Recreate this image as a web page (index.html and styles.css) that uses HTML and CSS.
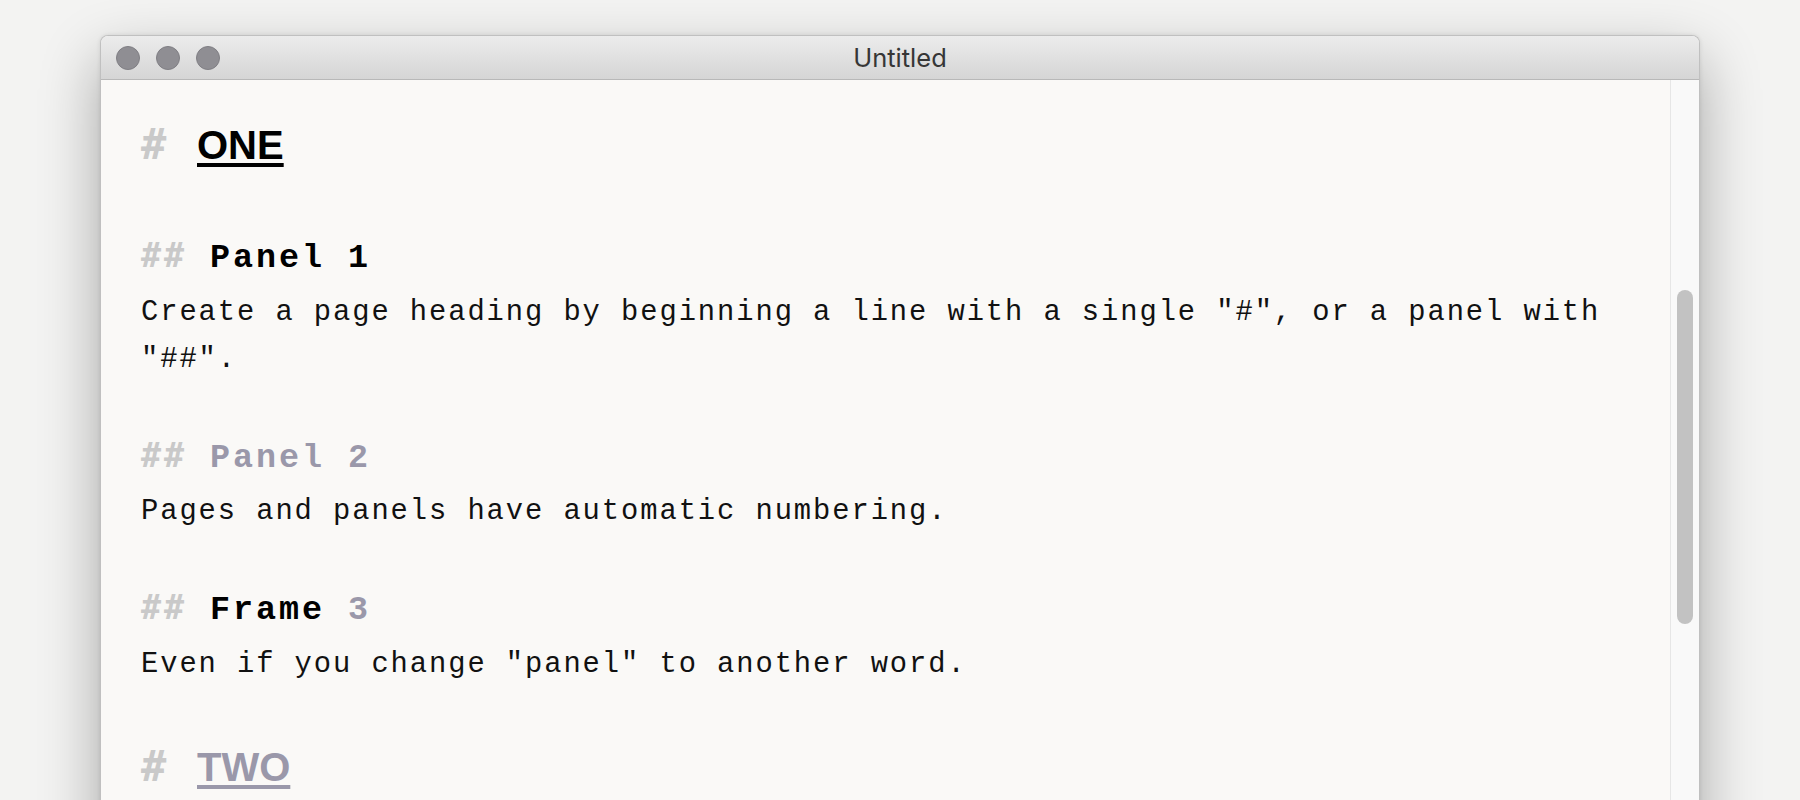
FILE: index.html
```html
<!DOCTYPE html>
<html lang="en">
<head>
<meta charset="utf-8">
<title>Untitled</title>
<link rel="stylesheet" href="styles.css">
</head>
<body>
<div class="desktop">
  <div class="window">
    <div class="titlebar">
      <div class="lights">
        <span class="light"></span>
        <span class="light"></span>
        <span class="light"></span>
      </div>
      <div class="title">Untitled</div>
      <div class="spacer"></div>
    </div>
    <div class="main">
      <div class="editor">
        <div class="h1"><span class="mark">#</span><span class="page-title">ONE</span></div>
        <div class="blank"></div>
        <div class="h2"><span class="mark">##</span> Panel 1</div>
        <p class="text">Create a page heading by beginning a line with a single "#", or a panel with "##".</p>
        <div class="blank"></div>
        <div class="h2 dim"><span class="mark">##</span> Panel 2</div>
        <p class="text">Pages and panels have automatic numbering.</p>
        <div class="blank"></div>
        <div class="h2"><span class="mark">##</span> Frame <span class="dim">3</span></div>
        <p class="text">Even if you change "panel" to another word.</p>
        <div class="blank"></div>
        <div class="h1"><span class="mark">#</span><span class="page-title dim">TWO</span></div>
      </div>
      <div class="scrolltrack">
        <div class="thumb"></div>
      </div>
    </div>
  </div>
</div>
</body>
</html>
```
FILE: styles.css
```css
* { box-sizing: border-box; }

html, body {
  margin: 0;
  height: 100%;
}

body {
  background: #f3f3f2;
  overflow: hidden;
  font-family: "Liberation Mono", "DejaVu Sans Mono", monospace;
}

.desktop {
  padding: 35px 100px 0 100px;
  height: 800px;
}

.window {
  height: 820px;
  background: #faf9f7;
  border: 1px solid #c0c0c0;
  border-bottom: none;
  border-radius: 8px 8px 0 0;
  box-shadow: 0 24px 60px rgba(0, 0, 0, 0.32), 0 0 4px rgba(0, 0, 0, 0.1);
  display: flex;
  flex-direction: column;
  overflow: hidden;
}

.titlebar {
  height: 44px;
  flex: none;
  display: grid;
  grid-template-columns: 1fr auto 1fr;
  align-items: center;
  background: linear-gradient(#ececec, #d5d5d5);
  border-bottom: 1px solid #b8b8b8;
}

.lights {
  display: flex;
  gap: 16px;
  padding-left: 15px;
}

.light {
  width: 24px;
  height: 24px;
  border-radius: 50%;
  background: #8f8e93;
  border: 1px solid #807f84;
}

.title {
  font-family: "Inter", "Liberation Sans", sans-serif;
  font-size: 25.5px;
  color: #363636;
}

.main {
  flex: 1;
  display: flex;
  min-height: 0;
}

.editor {
  flex: 1;
  min-width: 0;
  padding: 32px 30px 0 40px;
  color: #111;
}

.scrolltrack {
  width: 29px;
  flex: none;
  background: #f9f9f9;
  border-left: 1px solid #e6e6e6;
  padding: 210px 0 0 6px;
}

.thumb {
  width: 16px;
  height: 334px;
  border-radius: 8px;
  background: #c2c2c2;
}

.text {
  margin: 0 0 -1px 0;
  padding-top: 1px;
  font-size: 28.8px;
  line-height: 47px;
  letter-spacing: 1.92px;
  color: #111;
}

.blank {
  height: 47px;
}

.h2 {
  font-size: 33.4px;
  font-weight: bold;
  line-height: 58.5px;
  letter-spacing: 2.96px;
  color: #000;
}

.h2 .mark {
  font-family: "DejaVu Sans Mono", monospace;
  letter-spacing: 2.9px;
  line-height: 1;
}

.h1 {
  font-family: "Liberation Sans", Arial, sans-serif;
  font-weight: bold;
  font-size: 40px;
  line-height: 67px;
  margin-bottom: 3px;
  color: #000;
}

.h1 .mark {
  display: inline-block;
  width: 56px;
  font-family: "DejaVu Sans Mono", monospace;
  font-size: 42px;
  line-height: 1;
}

.mark {
  color: #c9c9c9;
}

.dim {
  color: #9a98aa;
}

.page-title {
  text-decoration: underline;
  text-decoration-thickness: 4px;
  text-underline-offset: 4px;
}
```
